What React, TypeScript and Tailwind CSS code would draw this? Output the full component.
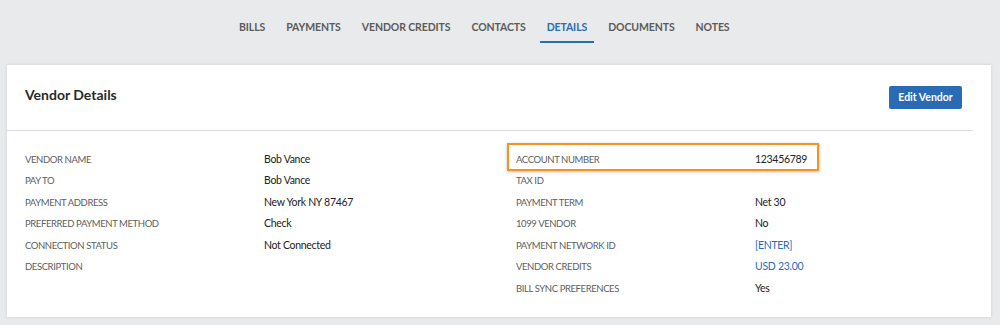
import React from "react";

const tabs = ["BILLS", "PAYMENTS", "VENDOR CREDITS", "CONTACTS", "DETAILS", "DOCUMENTS", "NOTES"];

type Row = { label: string; value?: string; link?: boolean };

const left: Row[] = [
  { label: "VENDOR NAME", value: "Bob Vance" },
  { label: "PAY TO", value: "Bob Vance" },
  { label: "PAYMENT ADDRESS", value: "New York NY 87467" },
  { label: "PREFERRED PAYMENT METHOD", value: "Check" },
  { label: "CONNECTION STATUS", value: "Not Connected" },
  { label: "DESCRIPTION" },
];

const right: Row[] = [
  { label: "ACCOUNT NUMBER", value: "123456789" },
  { label: "TAX ID" },
  { label: "PAYMENT TERM", value: "Net 30" },
  { label: "1099 VENDOR", value: "No" },
  { label: "PAYMENT NETWORK ID", value: "[ENTER]", link: true },
  { label: "VENDOR CREDITS", value: "USD 23.00", link: true },
  { label: "BILL SYNC PREFERENCES", value: "Yes" },
];

function Rows({ rows }: { rows: Row[] }) {
  return (
    <div className="flex flex-col">
      {rows.map((r) => (
        <div key={r.label} className="flex h-[21.5px] items-center">
          <div className="w-[239px] text-[9.5px] tracking-[-0.4px] text-[#606060]">{r.label}</div>
          <div
            className={
              "text-[10.5px] tracking-[-0.3px] " + (r.link ? "text-[#2b6cb8]" : "text-[#222222]")
            }
          >
            {r.value ?? ""}
          </div>
        </div>
      ))}
    </div>
  );
}

export default function App() {
  return (
    <div
      className="h-[325px] w-[1000px] overflow-hidden bg-[#e9eaec]"
      style={{ fontFamily: "Lato, 'Open Sans', sans-serif" }}
    >
      <nav className="flex h-[43px] items-end pl-[232px]">
        <div className="flex gap-[7px]">
          {tabs.map((t) => {
            const active = t === "DETAILS";
            return (
              <div
                key={t}
                className={
                  "flex h-[32px] items-center px-[7px] pt-[3px] text-[10.5px] font-bold tracking-[-0.1px] border-b-2 " +
                  (active ? "text-[#2b6cb8] border-[#2b6cb8]" : "text-[#5b5b5b] border-transparent")
                }
              >
                {t}
              </div>
            );
          })}
        </div>
      </nav>
      <div className="ml-[7px] mt-[22px] h-[252px] w-[984px] bg-white shadow-[0_0_3px_rgba(0,0,0,0.12)]">
        <div className="flex h-[65px] items-center justify-between pl-[18px] pr-[29px]">
          <h2 className="mb-[6px] text-[14px] font-bold text-[#2a2a2a]">Vendor Details</h2>
          <button className="h-[23px] w-[73px] rounded-[2px] bg-[#2a6bb5] text-[10.5px] font-bold text-white">
            Edit Vendor
          </button>
        </div>
        <div className="mr-[18px] h-px bg-[#dcdde2]" />
        <div className="flex pl-[18px] pt-[18px]">
          <div className="w-[491px]">
            <Rows rows={left} />
          </div>
          <div className="relative">
            <div className="pointer-events-none absolute left-[-9px] top-[-6px] h-[28px] w-[312px] border-2 border-[#f7941d] shadow-[0_1px_3px_rgba(0,0,0,0.25)]" />
            <Rows rows={right} />
          </div>
        </div>
      </div>
    </div>
  );
}
